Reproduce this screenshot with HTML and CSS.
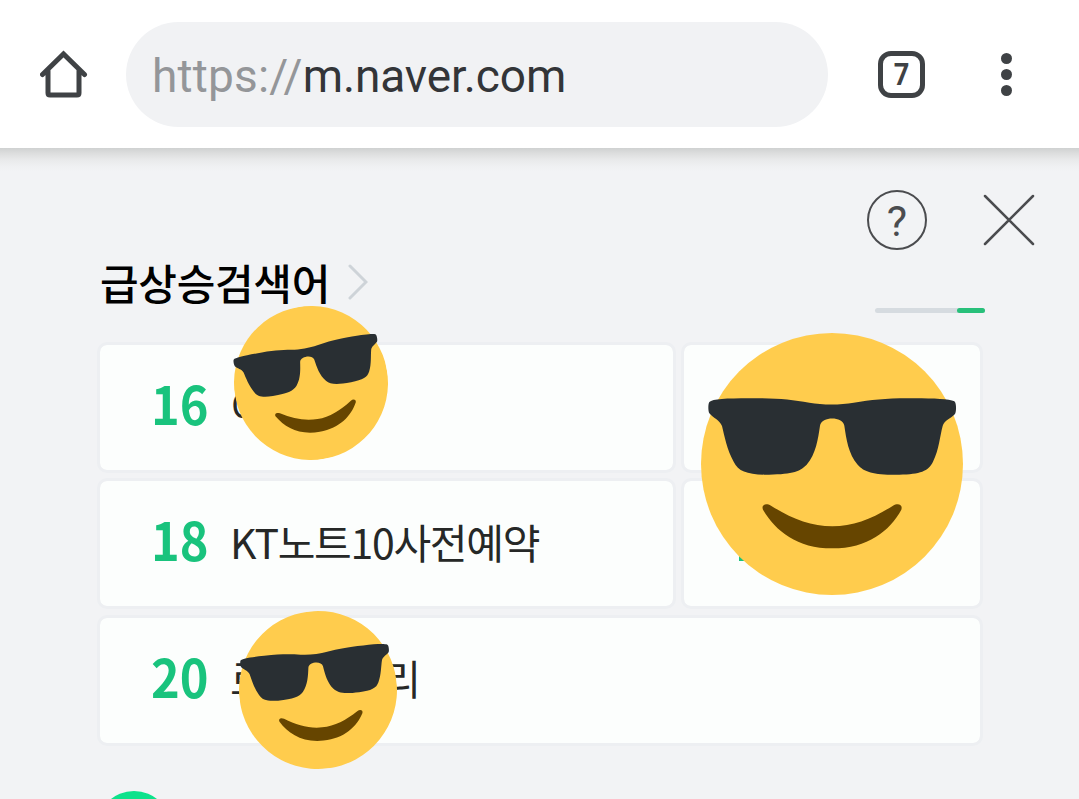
FILE: index.html
```
<!DOCTYPE html>
<html lang="ko">
<head>
    <meta charset="UTF-8">
    <meta name="viewport" content="width=device-width, initial-scale=1.0">
    <title>급상승검색어</title>
    <link rel="stylesheet" href="styles.css">
</head>
<body>
    <svg class="defs" width="0" height="0" aria-hidden="true">
        <symbol id="cool" viewBox="0 0 786 786">
            <circle cx="393" cy="393" r="393" fill="#ffcc4d"/>
            <path fill="#292f33" d="M25 207C35 198 75 196 145 196C225 195 270 200 325 209C365 216 418 216 458 209C515 200 560 195 640 196C700 196 745 198 760 205C767 210 766 236 762 243C750 256 730 262 725 279C717 308 714 350 696 386C682 415 658 423 595 425C520 426 490 418 470 395C442 362 436 318 430 278C425 249 362 249 357 278C351 318 345 362 317 395C295 418 268 424 190 425C137 423 112 415 98 386C78 350 70 308 63 279C57 262 35 254 25 241C21 232 21 214 25 207Z"/>
            <path fill="#664500" d="M186 530C180 516 194 508 210 518C270 556 330 580 394 580C458 580 516 556 576 518C592 509 606 516 601 530C566 594 500 646 394 646C288 646 224 594 186 530Z"/>
        </symbol>
    </svg>

    <header class="toolbar">
        <svg class="home" viewBox="0 0 48 48">
            <path d="M2.5 24.500 23.5 4 44.500 24.500M8 20.500V43Q8 45 10 45H37Q39 45 39 43V20.500"/>
        </svg>
        <div class="address"><span class="scheme">https://</span>m.naver.com</div>
        <div class="tabs"><span>7</span></div>
        <div class="menu"><i></i><i></i><i></i></div>
    </header>

    <main class="page">
        <div class="actions">
            <div class="help">?</div>
            <svg class="close" viewBox="0 0 52 52"><path d="M2 2 50 50M50 2 2 50"/></svg>
        </div>
        <div class="heading">
            <h1>급상승검색어</h1>
            <svg class="arrow" viewBox="0 0 20 36"><path d="M2 2 18 18 2 34"/></svg>
            <div class="pager"><span></span></div>
        </div>
        <div class="ranks">
            <div class="card"><b>16</b><span>이슈</span></div>
            <div class="card"><b>17</b></div>
            <div class="card"><b>18</b><span>KT노트10사전예약</span></div>
            <div class="card"><b>19</b></div>
            <div class="card wide"><b>20</b><span class="tight">로맨스 소리</span></div>
        </div>
        <svg class="dot" viewBox="0 0 80 9"><circle cx="40" cy="37" r="37"/></svg>
    </main>

    <!-- stickers over the list -->
    <svg class="sticker s1"><use href="#cool"/></svg>
    <svg class="sticker s2"><use href="#cool"/></svg>
    <svg class="sticker s3"><use href="#cool"/></svg>
</body>
</html>
```
FILE: styles.css
```
:root {
    --ink: #3f4245;
    --green: #19c37d;
    --bg: #f2f3f5;
}
*, *::before, *::after { box-sizing: border-box; margin: 0; padding: 0; }
body {
    position: relative;
    height: 799px;
    overflow: hidden;
    background: var(--bg);
    font-family: "Noto Sans CJK KR", sans-serif;
}
.defs { position: absolute; }

/* browser bar */
.toolbar {
    display: flex;
    align-items: center;
    height: 148px;
    padding: 0 67px 0 40px;
    background: #fff;
}
.home { width: 48px; height: 48px; fill: none; stroke: var(--ink); stroke-width: 5; stroke-linecap: round; }
.address {
    width: 702px;
    height: 105px;
    margin: 1px 50px 0 38px;
    padding-left: 26px;
    border-radius: 53px;
    background: #f1f2f4;
    color: #333538;
    font: 46px/108px Roboto, sans-serif;
    letter-spacing: -0.1px;
}
.scheme { color: #949699; letter-spacing: 0.2px; }
.tabs {
    width: 47px;
    height: 47px;
    margin-right: 76px;
    border: 5px solid var(--ink);
    border-radius: 13px;
    color: var(--ink);
    font: bold 32px/37px Roboto, sans-serif;
    text-align: center;
}
.tabs span { display: block; transform: scaleX(0.85); }
.menu { display: flex; flex-direction: column; gap: 5px; }
.menu i { width: 11px; height: 11px; border-radius: 50%; background: var(--ink); }

.page {
    height: 651px;
    padding: 42px 44px 0 97px;
    background: linear-gradient(#cfd1d1, #dcdddd 5px, #e9eaeb 12px, #f0f1f3 19px, var(--bg) 24px);
}
.actions { display: flex; justify-content: flex-end; align-items: center; gap: 56px; height: 60px; }
.help {
    width: 60px;
    height: 60px;
    border: 2px solid #4b4c4f;
    border-radius: 50%;
    color: #4b4c4f;
    font: 43px/58px Roboto, sans-serif;
    text-align: center;
}
.close { width: 52px; height: 52px; margin-top: -1px; fill: none; stroke: #4b4c4f; stroke-width: 2.5; stroke-linecap: round; }

.heading { display: flex; align-items: center; height: 65px; padding-left: 3px; }
h1 { margin-top: -2px; font-size: 42px; font-weight: 500; line-height: 63px; letter-spacing: -0.3px; color: #000; }
.arrow { width: 20px; height: 36px; margin: -2px 0 0 18px; fill: none; stroke: #ced3d8; stroke-width: 3; stroke-linecap: round; }
.pager { width: 110px; height: 5px; margin: 56px 50px 0 auto; border-radius: 3px; background: #d6dbe0; }
.pager span { display: block; width: 28px; height: 5px; margin-left: auto; border-radius: 3px; background: #28c07a; }

/* ranking list */
.ranks { display: grid; grid-template-columns: 579px 302px; grid-auto-rows: 131px; gap: 5.300px 5px; margin-top: 27px; }
.card {
    display: flex;
    align-items: center;
    padding-left: 51px;
    border: 3px solid #edeff2;
    border-radius: 10px;
    background: #fcfefd;
    background-clip: padding-box;
    white-space: nowrap;
}
.card b {
    width: 79px;
    padding-bottom: 10px;
    font-size: 53px;
    font-weight: 700;
    line-height: 1;
    color: var(--green);
    transform: scaleX(0.92);
    transform-origin: left;
}
.card span { padding-bottom: 5px; font-size: 41px; line-height: 1; letter-spacing: -1.3px; color: #262827; }
.card .tight { letter-spacing: -1.8px; }
.wide { grid-column: 1 / 3; }
.dot { display: block; width: 80px; height: 9px; margin: 45px 0 0 -3px; fill: #0de28b; }

.sticker { position: absolute; overflow: visible; }
.s1 { left: 234px; top: 306px; width: 154px; height: 154px; transform: rotate(-10deg); }
.s2 { left: 701px; top: 333px; width: 262px; height: 262px; }
.s3 { left: 239px; top: 611px; width: 158px; height: 158px; transform: rotate(-6deg); }
```
